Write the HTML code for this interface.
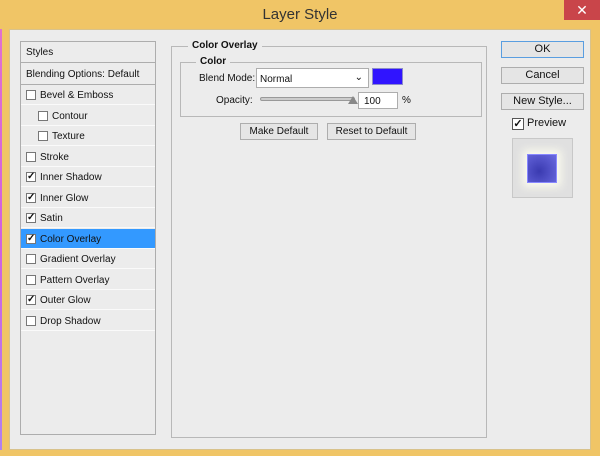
<!DOCTYPE html>
<html><head><meta charset="utf-8"><style>
*{margin:0;padding:0;box-sizing:border-box}
body{width:600px;height:456px;overflow:hidden;background:#f0c566;font-family:"Liberation Sans",sans-serif;font-size:10px;color:#111;position:relative}
.a{position:absolute}
.title{left:0;top:6px;width:600px;text-align:center;font-size:15px;color:#333}
.close{left:564px;top:0;width:36px;height:20px;background:#c9454a;color:#fff;text-align:center;font-size:14px;line-height:20px}
.inner{left:9px;top:29px;width:582px;height:421px;background:#ececec;border:1px solid #d8c28c}
.lp{left:20px;top:41px;width:136px;height:394px;border:1px solid #adadad;background:#ececec}
.row{position:absolute;left:0;width:134px;height:20px;border-bottom:1px solid #fafafa;line-height:21px}
.cb{position:absolute;top:5px;width:10px;height:10px;border:1px solid #777;background:#fff;font-size:10px;line-height:8px;text-align:center;font-weight:bold}
.btn{position:absolute;border:1px solid #adadad;background:#e5e5e5;text-align:center;font-size:11px}
.fs{position:absolute;border:1px solid #b8b8b8}
.lg{position:absolute;background:#ececec;font-weight:bold;padding:0 4px;font-size:10px}
</style></head><body>
<div class="a" style="left:0;top:29px;width:2px;height:421px;background:linear-gradient(#e070d0,#d060e0,#b080f0)"></div>
<div class="a title">Layer Style</div>
<div class="a close">✕</div>
<div class="a inner"></div>
<div class="a lp">
 <div class="row" style="top:0;height:21px;border-bottom:1px solid #adadad;padding-left:5px">Styles</div>
 <div class="row" style="top:22px;height:21px;border-bottom:1px solid #adadad;padding-left:5px">Blending Options: Default</div>
 <div class="row" style="top:43px"><span class="cb" style="left:5px"></span><span style="position:absolute;left:19px">Bevel &amp; Emboss</span></div>
 <div class="row" style="top:63.5px"><span class="cb" style="left:17px"></span><span style="position:absolute;left:31px">Contour</span></div>
 <div class="row" style="top:84px"><span class="cb" style="left:17px"></span><span style="position:absolute;left:31px">Texture</span></div>
 <div class="row" style="top:104.5px"><span class="cb" style="left:5px"></span><span style="position:absolute;left:19px">Stroke</span></div>
 <div class="row" style="top:125px"><span class="cb" style="left:5px">✓</span><span style="position:absolute;left:19px">Inner Shadow</span></div>
 <div class="row" style="top:145.5px"><span class="cb" style="left:5px">✓</span><span style="position:absolute;left:19px">Inner Glow</span></div>
 <div class="row" style="top:166px"><span class="cb" style="left:5px">✓</span><span style="position:absolute;left:19px">Satin</span></div>
 <div class="row" style="top:186.5px;background:#3399ff"><span class="cb" style="left:5px">✓</span><span style="position:absolute;left:19px">Color Overlay</span></div>
 <div class="row" style="top:207px"><span class="cb" style="left:5px"></span><span style="position:absolute;left:19px">Gradient Overlay</span></div>
 <div class="row" style="top:227.5px"><span class="cb" style="left:5px"></span><span style="position:absolute;left:19px">Pattern Overlay</span></div>
 <div class="row" style="top:248px"><span class="cb" style="left:5px">✓</span><span style="position:absolute;left:19px">Outer Glow</span></div>
 <div class="row" style="top:268.5px"><span class="cb" style="left:5px"></span><span style="position:absolute;left:19px">Drop Shadow</span></div>
</div>
<div class="fs" style="left:171px;top:46px;width:316px;height:392px;border-bottom:1px solid #b8b8b8"></div>
<div class="lg" style="left:188px;top:40px">Color Overlay</div>
<div class="fs" style="left:180px;top:62px;width:302px;height:55px"></div>
<div class="lg" style="left:196px;top:56px">Color</div>
<div class="a" style="left:199px;top:73px">Blend Mode:</div>
<div class="a" style="left:256px;top:68px;width:113px;height:20px;border:1px solid #adadad;background:#fff;padding:5px 3px">Normal<span style="position:absolute;right:5px;top:3px;font-size:10px">⌄</span></div>
<div class="a" style="left:372px;top:68px;width:31px;height:17px;background:#3014ff;border:1px solid #8c8cc8"></div>
<div class="a" style="left:216px;top:95px">Opacity:</div>
<div class="a" style="left:260px;top:97px;width:95px;height:4px;border:1px solid #999;background:#ccc;border-radius:2px"></div>
<div class="a" style="left:348px;top:96px;width:0;height:0;border-left:5px solid transparent;border-right:5px solid transparent;border-bottom:8px solid #888"></div>
<div class="a" style="left:358px;top:92px;width:40px;height:17px;border:1px solid #adadad;background:#fff;padding:3px 5px">100</div>
<div class="a" style="left:402px;top:95px">%</div>
<div class="btn" style="left:240px;top:123px;width:78px;height:17px;line-height:15px;font-size:10px">Make Default</div>
<div class="btn" style="left:327px;top:123px;width:89px;height:17px;line-height:15px;font-size:10px">Reset to Default</div>
<div class="btn" style="left:501px;top:41px;width:83px;height:17px;line-height:15px;border-color:#5a9ee0">OK</div>
<div class="btn" style="left:501px;top:67px;width:83px;height:17px;line-height:15px">Cancel</div>
<div class="btn" style="left:501px;top:93px;width:83px;height:17px;line-height:15px">New Style...</div>
<div class="a" style="left:512px;top:118px;width:12px;height:12px;border:1px solid #555;background:#fff;font-weight:bold;font-size:11px;line-height:10px;text-align:center">✓</div>
<div class="a" style="left:527px;top:117px;font-size:11px">Preview</div>
<div class="a" style="left:512px;top:138px;width:61px;height:60px;border:1px solid #c8c8c8;background:#e0e0e0"></div>
<div class="a" style="left:527px;top:154px;width:30px;height:29px;background:radial-gradient(circle at 40% 60%,#3a3ab0,#6a6ae0);border:1px solid #8888ff;box-shadow:0 0 8px 4px #fbfbee"></div>
<div class="a" style="left:0;top:450px;width:600px;height:6px;background:#f0c566"></div>
</body></html>
